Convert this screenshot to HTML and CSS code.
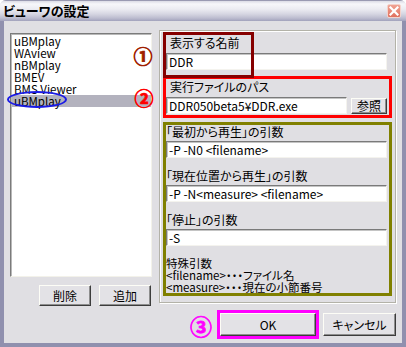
FILE: index.html
```html
<!DOCTYPE html>
<html>
<head>
  <title>ビューワの設定</title>
  <link rel="stylesheet" href="styles.css">
</head>
<body>
  <div class="window">
    <div class="titlebar">
      <span class="title">ビューワの設定</span>
      <span class="close-btn">
        <svg width="10" height="10" viewBox="0 0 10 10">
          <path d="M1.5 1.5 L8.5 8.5 M8.5 1.5 L1.5 8.5" stroke="#fff" stroke-width="2.2" stroke-linecap="square"/>
        </svg>
      </span>
    </div>

    <div class="client">
      <!-- viewer list -->
      <div class="left-pane">
        <div class="listbox">
          <div class="list-item">uBMplay</div>
          <div class="list-item">WAview</div>
          <div class="list-item">nBMplay</div>
          <div class="list-item">BMEV</div>
          <div class="list-item">BMS Viewer</div>
          <div class="list-item selected">uBMplay</div>
          <span class="mark-ellipse"></span>
        </div>
        <div class="list-buttons">
          <button class="btn btn-small">削除</button>
          <button class="btn btn-small">追加</button>
        </div>
      </div>

      <!-- settings -->
      <div class="right-pane">
        <div class="groupbox">
          <div class="field field-name">
            <div class="field-label">表示する名前</div>
            <input class="text-input" type="text" value="DDR">
          </div>

          <div class="field mark-red">
            <div class="field-label">実行ファイルのパス</div>
            <div class="path-row">
              <input class="text-input path-input" type="text" value="DDR050beta5¥DDR.exe">
              <button class="btn btn-browse">参照</button>
            </div>
          </div>

          <div class="mark-olive">
            <div class="arg-label first">「最初から再生」の引数</div>
            <input class="text-input" type="text" value="-P -N0 <filename>">
            <div class="arg-label">「現在位置から再生」の引数</div>
            <input class="text-input" type="text" value="-P -N<measure> <filename>">
            <div class="arg-label">「停止」の引数</div>
            <input class="text-input" type="text" value="-S">
            <div class="note">
              <div>特殊引数</div>
              <div>&lt;filename&gt;・・・ファイル名</div>
              <div>&lt;measure&gt;・・・現在の小節番号</div>
            </div>
          </div>
        </div>

        <div class="dialog-buttons">
          <span class="num num3">③</span>
          <div class="mark-magenta">
            <button class="btn btn-ok">OK</button>
          </div>
          <button class="btn btn-cancel">キャンセル</button>
        </div>
      </div>
    </div>

    <span class="num num1">①</span>
    <span class="num num2">②</span>
  </div>
</body>
</html>
```

FILE: styles.css
```css
* {
  box-sizing: border-box;
}

body {
  margin: 0;
  font-family: "Noto Sans CJK JP", "Noto Sans", sans-serif;
  font-size: 12px;
  font-feature-settings: "palt";
  color: #000;
  background: #fff;
}

.window {
  position: relative;
  width: 406px;
  height: 347px;
  display: flex;
  flex-direction: column;
  background: #e0dfe3;
  border-radius: 6px 6px 0 0;
  overflow: hidden;
}

/* title bar */
.titlebar {
  height: 21px;
  flex: none;
  display: flex;
  align-items: center;
  justify-content: space-between;
  padding: 0 5px 0 3px;
  border-top: 1px solid #9a9ab2;
  background: linear-gradient(#dcdce6 0, #f7f7fa 3px, #ececf2 8px, #d6d6e2 13px, #bdbdd0 17px, #a2a2bc 20px);
}

.title {
  font-weight: bold;
  font-size: 13px;
  line-height: 14px;
}

.close-btn {
  width: 14px;
  height: 14px;
  display: flex;
  align-items: center;
  justify-content: center;
  border: 1px solid #f3d2cb;
  border-radius: 2px;
  background: linear-gradient(#f0a393, #e0705e);
}

.client {
  flex: 1;
  display: flex;
  align-items: flex-start;
  padding-left: 6px;
  border: 4px solid #9090ae;
  border-top: 0;
}

/* left pane */
.left-pane {
  margin-top: 12px;
}

.listbox {
  position: relative;
  width: 142px;
  height: 244px;
  padding: 1px 0 0 1px;
  background: #fff;
  border: 1px solid;
  border-color: #7b7b7b #f3f2ea #f3f2ea #7b7b7b;
  box-shadow: inset 1px 1px 0 #b8b8b8;
}

.list-item {
  height: 12px;
  font-size: 11.5px;
  line-height: 12px;
  padding-left: 2px;
  white-space: nowrap;
}

.list-item.selected {
  background: #b3b2be;
}

.mark-ellipse {
  position: absolute;
  left: -4px;
  top: 57px;
  width: 60px;
  height: 17px;
  border: 2px solid #1a1ae6;
  border-radius: 50%;
}

.list-buttons {
  display: flex;
  gap: 8px;
  margin: 8px 0 0 29px;
}

/* buttons */
.btn {
  font: inherit;
  color: #000;
  padding: 0;
  line-height: 1;
  background: #e3e2e6;
  border: 1px solid;
  border-color: #fdfdf6 #3c3c3c #3c3c3c #fdfdf6;
  box-shadow: inset -1px -1px 0 #8e8e8e;
}

.btn-small {
  width: 52px;
  height: 21px;
}

.btn-browse {
  width: 36px;
  height: 16px;
}

.btn-ok {
  display: block;
  width: 96px;
  height: 23px;
}

.btn-cancel {
  width: 73px;
  height: 23px;
}

/* right pane */
.right-pane {
  width: 237px;
  margin: 9px 0 0 7px;
}

.groupbox {
  width: 237px;
  height: 273px;
  padding: 0 3px;
  border: 1px solid #b3b2a8;
  box-shadow: inset 1px 1px 0 #fff, 1px 1px 0 #fff;
}

.field {
  height: 42px;
  border: 3px solid transparent;
}

.field-name {
  position: relative;
  margin-top: 1px;
}

.field-name::after {
  content: "";
  position: absolute;
  left: -3px;
  top: -3px;
  width: 85px;
  height: 40px;
  border: 3px solid #860000;
}

.mark-red {
  margin-top: 2px;
  border-color: #ff0000;
}

.field-label {
  margin-top: 1px;
  padding-left: 4px;
  line-height: 14px;
  white-space: nowrap;
}

.text-input {
  display: block;
  width: 221px;
  height: 17px;
  margin-top: 3px;
  padding: 0 2px;
  font: inherit;
  line-height: 13px;
  color: #000;
  background: #fff;
  border: 1px solid;
  border-color: #7a7a7a #f4f3ee #f4f3ee #7a7a7a;
  box-shadow: inset 1px 1px 0 #c4c4c4;
  outline: none;
}

.path-row {
  display: flex;
  align-items: center;
  gap: 4px;
  margin-top: 3px;
}

.path-row .text-input {
  width: 181px;
  margin-top: 0;
}

.mark-olive {
  height: 174px;
  margin-top: 4px;
  border: 3px solid #808000;
}

.arg-label {
  margin-top: 11px;
  line-height: 13px;
  white-space: nowrap;
}

.arg-label.first {
  margin-top: 0;
}

.note {
  margin-top: 11px;
  font-size: 11.5px;
  line-height: 12px;
  white-space: nowrap;
}

/* bottom buttons */
.dialog-buttons {
  display: flex;
  align-items: center;
  justify-content: flex-end;
  margin-top: 7px;
}

.mark-magenta {
  border: 3px solid #ff00ff;
  margin-right: 4px;
}

/* circled annotation numbers */
.num {
  display: flex;
  align-items: center;
  justify-content: center;
  font-weight: bold;
  line-height: 1;
  -webkit-text-stroke: 0.7px currentColor;
}

.num1,
.num2 {
  position: absolute;
  width: 18px;
  height: 18px;
  font-size: 19px;
}

.num1 {
  left: 134px;
  top: 46px;
  color: #a02000;
}

.num2 {
  left: 135px;
  top: 88px;
  color: #ff0000;
}

.num3 {
  width: 22px;
  height: 18px;
  margin-right: 5px;
  font-size: 22px;
  color: #ff00ff;
}
```
